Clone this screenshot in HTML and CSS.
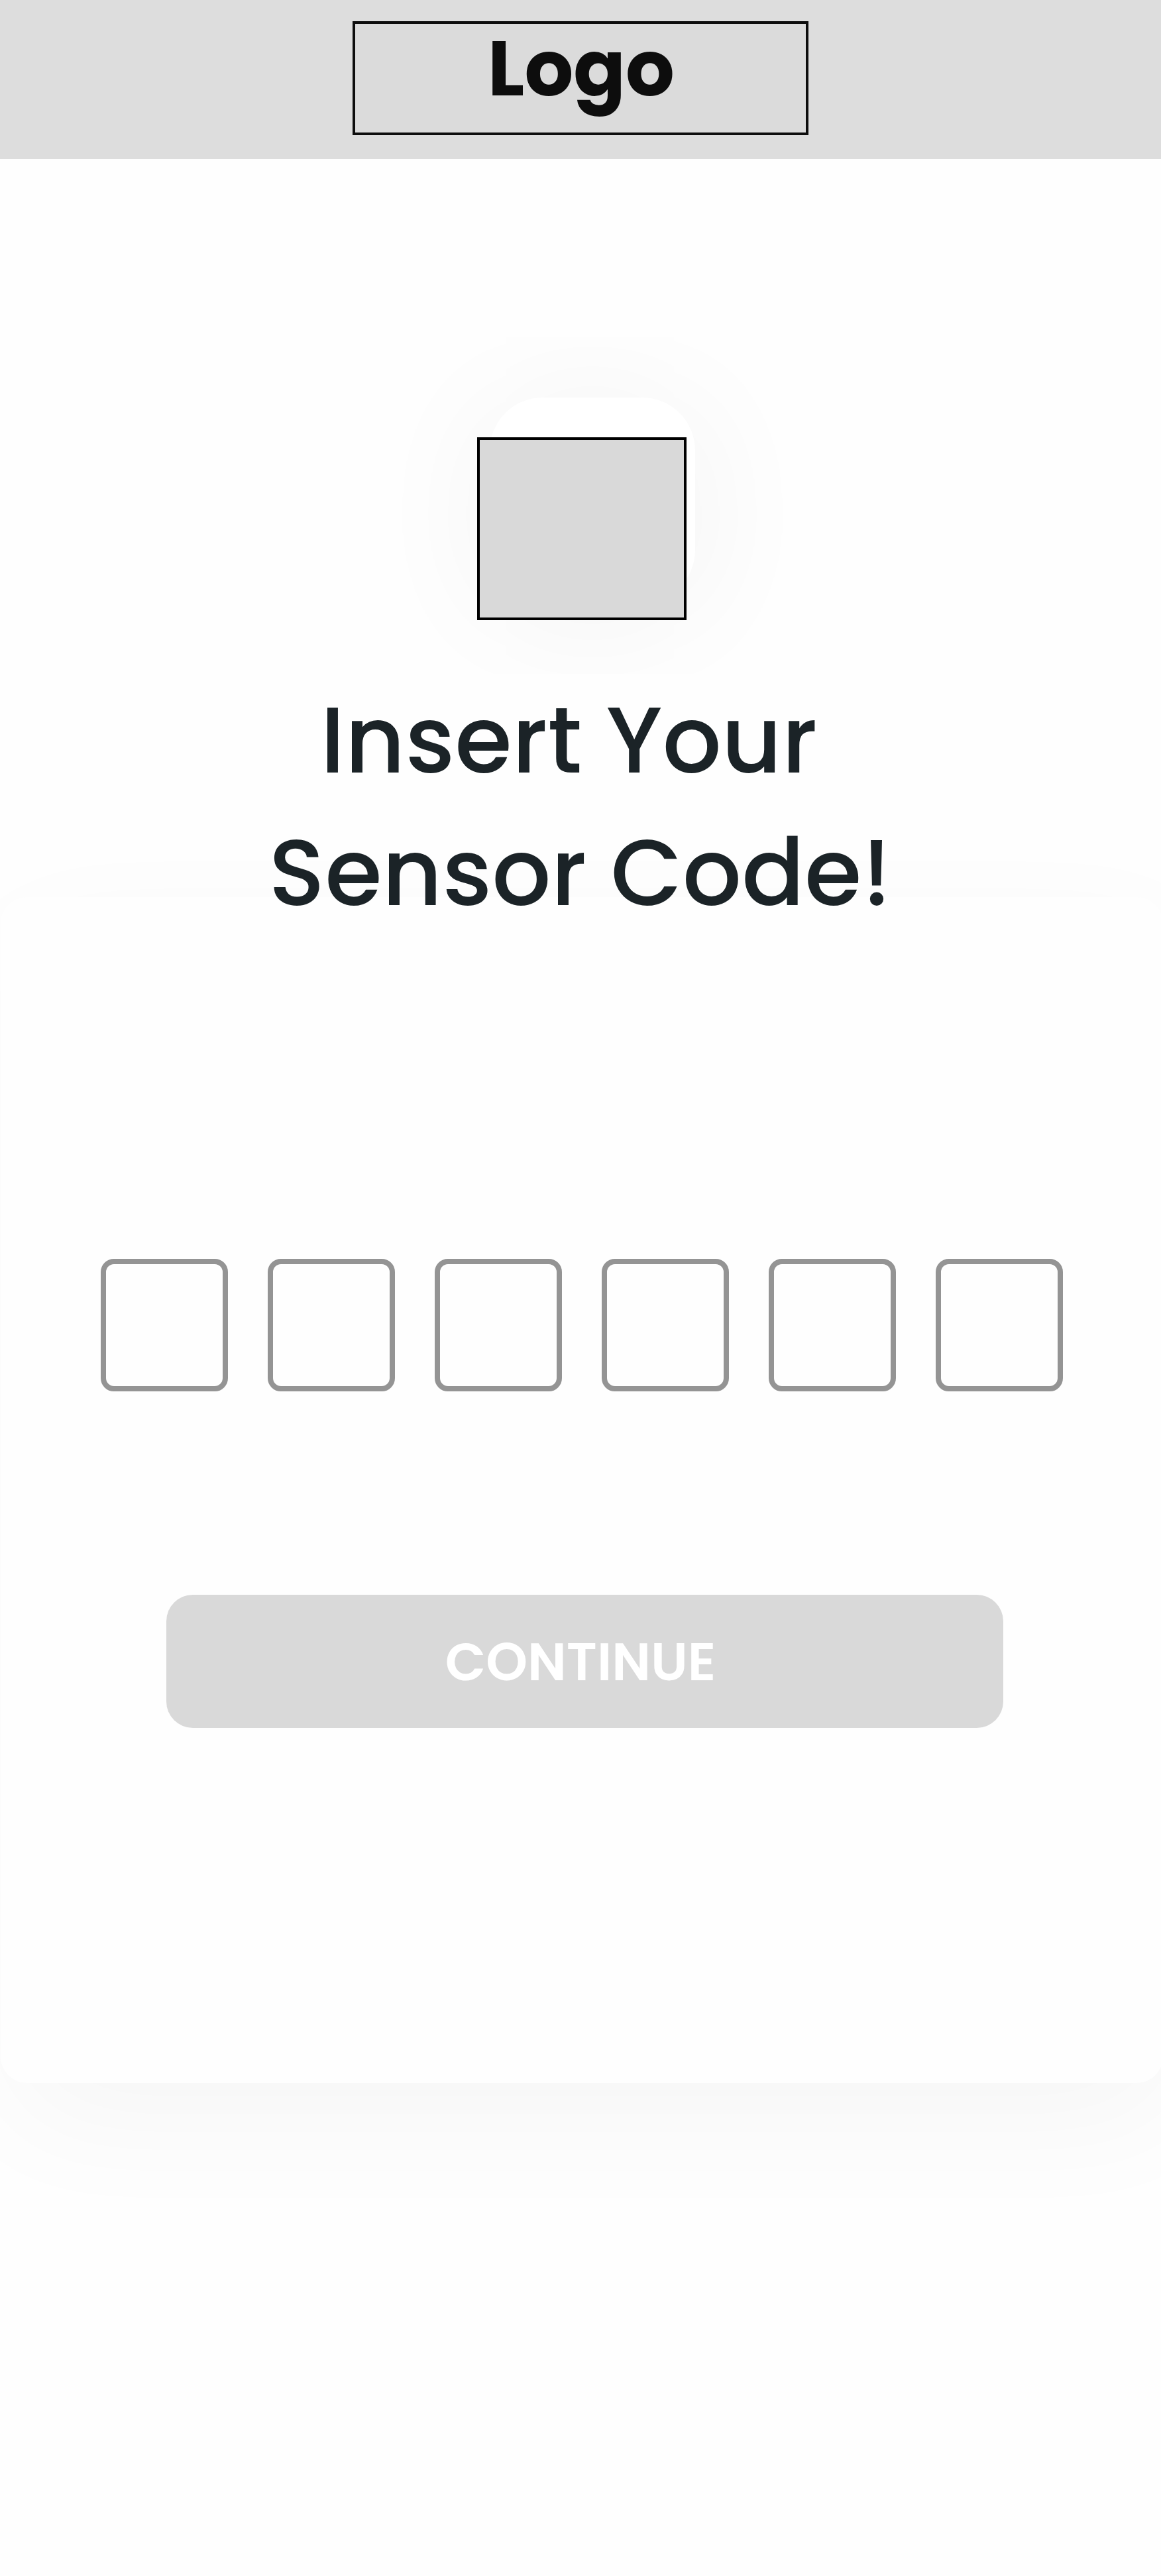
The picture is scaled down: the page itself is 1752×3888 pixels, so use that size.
FILE: index.html
```html
<!DOCTYPE html>
<html lang="en">
<head>
<meta charset="utf-8">
<title>Insert Your Sensor Code</title>
<link rel="stylesheet" href="styles.css">
</head>
<body>
<header class="header"><div class="logo"><span class="logo-text">Logo</span></div></header>
<main>
<section class="hero">
<div class="tile"><div class="picture"></div></div>
<h1 class="title"><span class="line line-first">Insert Your</span><span class="line">Sensor Code!</span></h1>
</section>
<form class="sheet">
<div class="code">
<input class="digit" maxlength="1" aria-label="Digit 1">
<input class="digit" maxlength="1" aria-label="Digit 2">
<input class="digit" maxlength="1" aria-label="Digit 3">
<input class="digit" maxlength="1" aria-label="Digit 4">
<input class="digit" maxlength="1" aria-label="Digit 5">
<input class="digit" maxlength="1" aria-label="Digit 6">
</div>
<button class="continue" type="button">CONTINUE</button>
</form>
</main>
</body>
</html>
```
FILE: styles.css
```css
* { box-sizing: border-box; }
body {
  margin: 0;
  min-height: 3888px;
  background: #fefefe;
  font-family: Poppins, Inter, "Liberation Sans", sans-serif;
  overflow-x: hidden;
}
.header {
  display: flex;
  justify-content: center;
  height: 240px;
  padding-top: 32px;
  background: #ddd;
}
.logo {
  display: flex;
  justify-content: center;
  width: 688px;
  height: 172px;
  padding-left: 2px;
  border: 4px solid #0d0d0d;
  background: #dbdbdb;
}
.logo-text {
  font-size: 116px;
  font-weight: 700;
  line-height: 135px;
  color: #0d0d0d;
}
.hero {
  position: relative;
  z-index: 1;
  display: flex;
  flex-direction: column;
  align-items: center;
  padding-top: 360px;
}
.tile {
  width: 310px;
  height: 310px;
  margin-left: 35px;
  padding-top: 60px;
  border-radius: 80px;
  background: #fff;
  box-shadow: 0 16px 200px rgba(0, 0, 0, 0.056);
}
.picture {
  width: 316px;
  height: 276px;
  margin-left: -19px;
  border: 4px solid #000;
  background: #d9d9d9;
}
.title {
  display: flex;
  flex-direction: column;
  align-items: center;
  margin: 107px 0 0;
  padding-right: 1px;
  font-size: 140px;
  font-weight: 500;
  line-height: 200px;
  color: #1b2327;
}
.line-first { margin-right: 34px; }
/* The sheet slides up under the last line of the title. */
.sheet {
  display: flex;
  flex-direction: column;
  align-items: center;
  width: 1754px;
  height: 1790px;
  margin: -63px 0 0 1px;
  padding-top: 546px;
  border-radius: 40px;
  background: #fefefe;
  box-shadow: 20px 60px 190px rgba(0, 0, 0, 0.034);
}
.code { display: flex; gap: 60px; }
.digit {
  width: 192px;
  height: 200px;
  padding: 0;
  border: 8px solid #949494;
  border-radius: 20px;
  background: #fefefe;
  font: 500 96px Poppins, Inter, sans-serif;
  text-align: center;
}
.continue {
  width: 1263px;
  height: 201px;
  margin: 307px 0 0 9px;
  padding: 0 13px 0 0;
  border: 0;
  border-radius: 40px;
  background: #d9d9d9;
  font-family: inherit;
  font-size: 80px;
  font-weight: 600;
  color: #fff;
}
```
